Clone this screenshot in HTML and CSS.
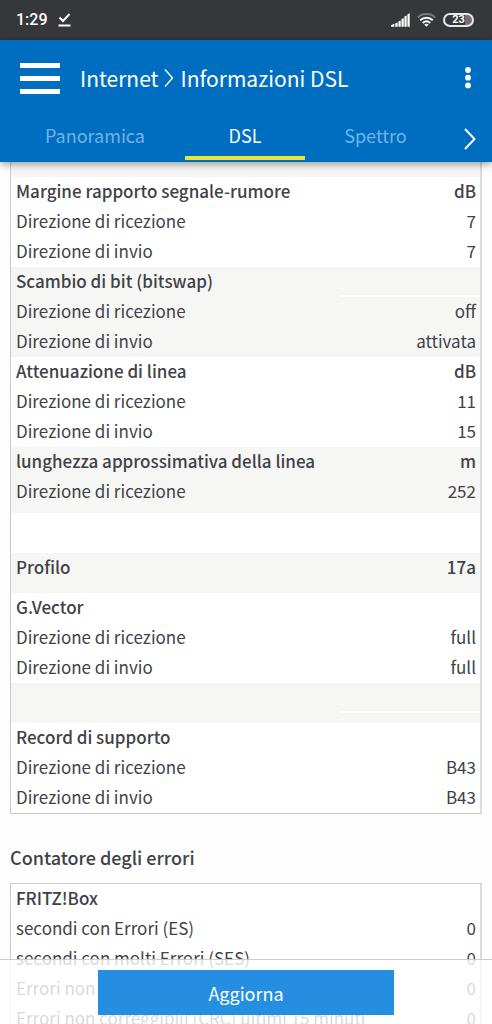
FILE: index.html
```html
<!DOCTYPE html>
<html lang="it">
<head>
    <meta charset="UTF-8">
    <meta name="viewport" content="width=device-width, initial-scale=1.0">
    <title>Informazioni DSL</title>
    <link rel="stylesheet" href="styles.css">
</head>
<body>

<div class="status-bar">
    <span class="clock">1:29</span>
    <svg class="download-icon" width="13" height="14" viewBox="0 0 13 14" fill="none" stroke="#fff" stroke-width="2">
        <path d="M1.500 4.500L5 8L11.500 1"/>
        <path d="M0.500 12.500H12.500"/>
    </svg>
    <div class="status-icons">
        <svg width="19" height="14" viewBox="0 0 20 14" fill="#fff">
            <path d="M0 14V12.500L3.500 11V14zM4.500 10.500L7 9.500V14H4.500zM7.800 8.500L10.200 7.500V14H7.800zM11 6L13.400 5V14H11zM14.100 3.300L16.500 2.300V14H14.100zM17.300 1L19.700 0V14H17.300z"/>
        </svg>
        <svg width="19" height="14" viewBox="0 0 19 14" fill="none" stroke="#fff" stroke-width="2">
            <path d="M0.800 4.500C5.500 -0.200 13.500 -0.200 18.200 4.500" stroke="#77787c"/>
            <path d="M3.200 7.300C6.800 3.900 12.200 3.900 15.800 7.300"/>
            <path d="M5.800 10C8 8 11 8 13.200 10"/>
            <path d="M7.300 11.500Q9.500 9.800 11.700 11.500L9.500 13.800z" fill="#fff" stroke="none"/>
        </svg>
        <span class="battery">23</span>
    </div>
</div>

<header class="header">
    <div class="title-bar">
        <button class="menu-button" aria-label="Menu">
            <span></span>
            <span></span>
            <span></span>
        </button>
        <h1 class="title">
            <a href="#internet">Internet</a>
            <svg width="10" height="18" viewBox="0 0 10 18" fill="none" stroke="#fff" stroke-width="1.400">
                <path d="M1 0.500L8.500 9L1 17.500"/>
            </svg>
            <span>Informazioni DSL</span>
        </h1>
        <button class="more-button" aria-label="Altro">
            <svg width="6" height="22" viewBox="0 0 6 22" fill="#fff">
                <circle cx="3" cy="3" r="2.900"/>
                <circle cx="3" cy="10.700" r="2.900"/>
                <circle cx="3" cy="18.400" r="2.900"/>
            </svg>
        </button>
    </div>
    <nav class="tabs">
        <a class="tab" href="#panoramica">Panoramica</a>
        <a class="tab active" href="#dsl">DSL</a>
        <a class="tab" href="#spettro">Spettro</a>
        <button class="next-button" aria-label="Avanti">
            <svg width="12" height="22" viewBox="0 0 12 22" fill="none" stroke="#fff" stroke-width="2">
                <path d="M1 1L10.500 11L1 21"/>
            </svg>
        </button>
    </nav>
</header>

<main class="content">
    <div class="box box-scrolled">
        <table class="values">
            <colgroup>
                <col class="col-name">
                <col class="col-value">
            </colgroup>
            <tbody class="gray">
                <tr class="cut"><td></td><td></td></tr>
            </tbody>
            <tbody>
                <tr><th>Margine rapporto segnale-rumore</th><th>dB</th></tr>
                <tr><td>Direzione di ricezione</td><td>7</td></tr>
                <tr><td>Direzione di invio</td><td>7</td></tr>
            </tbody>
            <tbody class="gray">
                <tr><th>Scambio di bit (bitswap)</th><td class="empty"></td></tr>
                <tr><td>Direzione di ricezione</td><td>off</td></tr>
                <tr><td>Direzione di invio</td><td>attivata</td></tr>
            </tbody>
            <tbody>
                <tr><th>Attenuazione di linea</th><th>dB</th></tr>
                <tr><td>Direzione di ricezione</td><td>11</td></tr>
                <tr><td>Direzione di invio</td><td>15</td></tr>
            </tbody>
            <tbody class="gray">
                <tr><th>lunghezza approssimativa della linea</th><th>m</th></tr>
                <tr class="last"><td>Direzione di ricezione</td><td>252</td></tr>
            </tbody>
            <tbody>
                <tr class="tall"><td></td><td></td></tr>
            </tbody>
            <tbody class="gray">
                <tr class="tall"><th>Profilo</th><th>17a</th></tr>
            </tbody>
            <tbody>
                <tr><th>G.Vector</th><td></td></tr>
                <tr><td>Direzione di ricezione</td><td>full</td></tr>
                <tr><td>Direzione di invio</td><td>full</td></tr>
            </tbody>
            <tbody class="gray">
                <tr class="tall"><td></td><td class="empty"></td></tr>
            </tbody>
            <tbody>
                <tr><th>Record di supporto</th><td></td></tr>
                <tr><td>Direzione di ricezione</td><td>B43</td></tr>
                <tr><td>Direzione di invio</td><td>B43</td></tr>
            </tbody>
        </table>
    </div>

    <h2 class="section-title">Contatore degli errori</h2>
    <div class="box">
        <table class="values">
            <colgroup>
                <col class="col-name">
                <col class="col-value">
            </colgroup>
            <tbody>
                <tr><th>FRITZ!Box</th><td></td></tr>
                <tr><td>secondi con Errori (ES)</td><td>0</td></tr>
                <tr><td>secondi con molti Errori (SES)</td><td>0</td></tr>
                <tr><td>Errori non</td><td>0</td></tr>
                <tr><td>Errori non correggibili (CRC) ultimi 15 minuti</td><td>0</td></tr>
            </tbody>
        </table>
    </div>
</main>

<footer class="footer">
    <button class="refresh-button">Aggiorna</button>
</footer>

</body>
</html>
```
FILE: styles.css
```css
* {
    box-sizing: border-box;
}
body {
    margin: 0;
    height: 100vh;
    display: flex;
    flex-direction: column;
    overflow: hidden;
    font-family: "Noto Sans CJK SC", sans-serif;
    font-size: 17px;
    line-height: 28px;
    color: #3f4246;
    background-color: #fefefe;
}
button {
    padding: 0;
    border: none;
    background: none;
    font-family: inherit;
    color: white;
    cursor: pointer;
}
a {
    color: inherit;
    text-decoration: none;
}
svg {
    display: block;
}

/* Phone status bar */
.status-bar {
    flex: none;
    height: 40px;
    padding: 0 18px 0 16px;
    display: flex;
    align-items: center;
    gap: 10px;
    background-color: #36373b;
    color: white;
    font-family: Roboto, sans-serif;
}
.clock {
    font-size: 16px;
    font-weight: 500;
}
.status-icons {
    margin-left: auto;
    display: flex;
    align-items: center;
    gap: 7px;
}
.battery {
    width: 31px;
    height: 14px;
    border: 2px solid #e8e8e8;
    border-radius: 7px;
    background: linear-gradient(to right, transparent 75%, #707175 75%);
    font-size: 11px;
    font-weight: 700;
    line-height: 10px;
    text-align: center;
}

/* Header */
.header {
    flex: none;
    position: relative;
    z-index: 1;
    background-color: #006ec0;
    color: white;
    box-shadow: 0 2px 8px rgba(0, 0, 0, 0.4);
}
.title-bar {
    height: 76px;
    padding: 0 21px 0 20px;
    display: flex;
    align-items: center;
}
.menu-button {
    width: 40px;
    display: grid;
    gap: 8px;
}
.menu-button span {
    height: 5px;
    background-color: white;
}
.title {
    flex: 1;
    margin: 0 0 0 20px;
    display: flex;
    align-items: center;
    gap: 6px;
    font-size: 21px;
    font-weight: 400;
    white-space: nowrap;
}
.tabs {
    height: 46px;
    padding: 0 16px 0 5px;
    display: grid;
    grid-template-columns: 180fr 120fr 141fr 30px;
}
.tab {
    height: 44px;
    padding-top: 5px;
    font-size: 18px;
    text-align: center;
    color: #6fb3ea;
}
.tab.active {
    border-bottom: 4px solid #e6e63a;
    color: white;
}
.next-button {
    display: flex;
    align-items: center;
    justify-content: flex-end;
}

/* Tables */
.content {
    flex: 1;
    min-height: 0;
    overflow: hidden;
    padding: 0 10px;
}
.box {
    border: 1px solid #c9c9c6;
    border-right: 2px solid #dcdcdc;
    background-color: white;
}
.box-scrolled {
    border-top: none;
}
.values {
    width: 100%;
    table-layout: fixed;
    border-spacing: 0;
}
.col-name {
    width: 70%;
}
.col-value {
    width: 30%;
}
.values th,
.values td {
    height: 30px;
    padding: 0 5px;
    text-align: left;
    vertical-align: top;
    white-space: nowrap;
}
.values th {
    font-weight: 500;
}
.values th:last-child,
.values td:last-child {
    padding-right: 4px;
    text-align: right;
}
.values .gray {
    background-color: #f6f6f5;
}
.values .cut td {
    height: 15px;
}
.values .last td {
    height: 36px;
}
.values .tall th,
.values .tall td {
    height: 40px;
}
.values .empty {
    background: linear-gradient(white, white) 0 28px / 100% 2px no-repeat;
}
.section-title {
    margin: 29px 0 12px;
    font-size: 18px;
    font-weight: 500;
}

/* Bottom bar over the scrolled content */
.footer {
    position: fixed;
    left: 0;
    right: 0;
    bottom: 0;
    height: 65px;
    padding-top: 10px;
    border-top: 1px solid #ccc;
    background-color: rgba(255, 255, 255, 0.8);
    text-align: center;
}
.refresh-button {
    width: 60%;
    height: 45px;
    background-color: #268ee0;
    font-size: 18px;
}
```
